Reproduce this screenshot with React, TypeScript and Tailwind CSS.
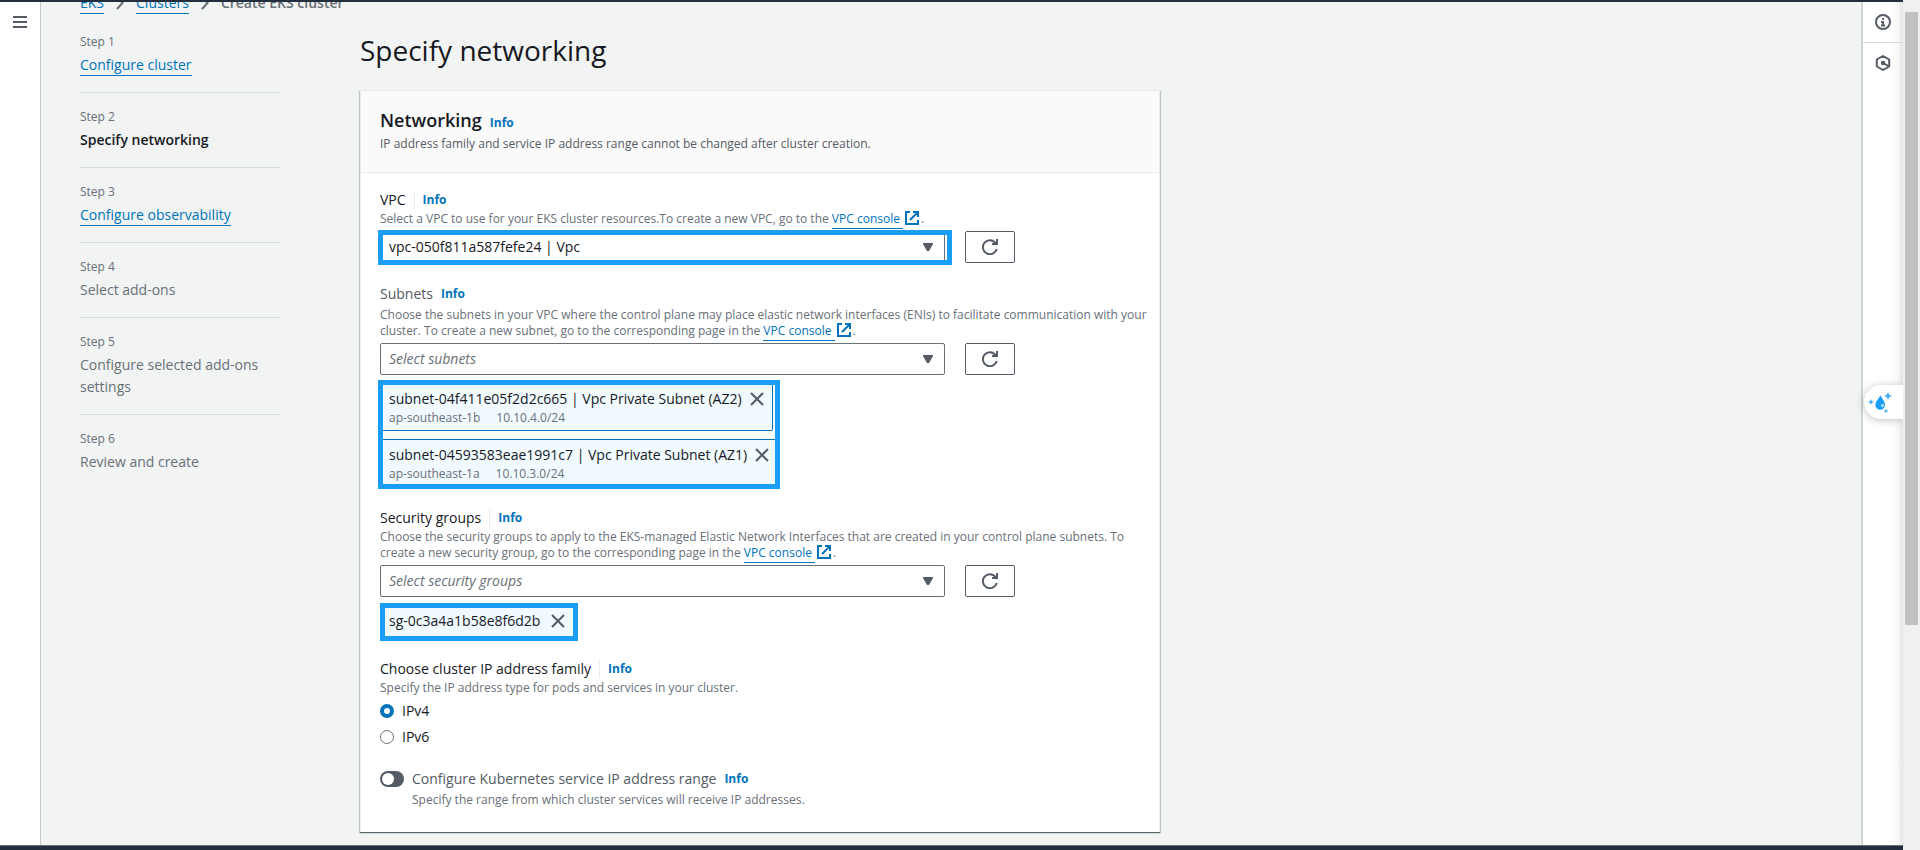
import type { ReactNode } from "react";

function InfoLink() {
  return (
    <a href="#info" className="text-xs leading-4 font-bold text-[#0073bb]">
      Info
    </a>
  );
}

function ExternalIcon() {
  return (
    <svg viewBox="0 0 14 14" className="mx-0.5 inline-block size-3.5 align-[-2px]" fill="none" stroke="#0073bb" strokeWidth="2" aria-hidden="true">
      <path d="M5 1H1v12h12V9" />
      <path d="M8 1h5v5M12.500 1.500 5 9" />
    </svg>
  );
}

function ConsoleLink() {
  return (
    <>
      <a href="#vpc-console" className="text-[#0073bb]">
        <span className="border-b border-[#0073bb] pb-px whitespace-pre">VPC console </span>
        <ExternalIcon />
      </a>
      .
    </>
  );
}

function Chevron() {
  return (
    <svg viewBox="0 0 8 14" className="mx-3 h-3.5 w-2" fill="none" stroke="#687078" strokeWidth="2" aria-hidden="true">
      <path d="m1 1 5.500 6L1 13" />
    </svg>
  );
}

function CloseIcon() {
  return (
    <svg viewBox="0 0 14 14" className="size-3.5" fill="none" stroke="#545b64" strokeWidth="2" aria-hidden="true">
      <path d="m1 1 12 12M13 1 1 13" />
    </svg>
  );
}

function RefreshButton({ label }: { label: string }) {
  return (
    <button type="button" aria-label={label} className="flex h-8 w-[50px] shrink-0 items-center justify-center rounded-[2px] border border-[#545b64] bg-white">
      <svg viewBox="0 0 16 16" className="size-4" fill="none" stroke="#545b64" strokeWidth="2" aria-hidden="true">
        <path d="M14.700 10A7 7 0 1 1 13.600 4.200L15 5.800" />
        <path d="M15 0v5h-5" />
      </svg>
    </button>
  );
}

function SelectRow({ id, value, placeholder, refresh, highlighted }: { id: string; value: string; placeholder?: boolean; refresh: string; highlighted?: boolean }) {
  return (
    <div className="mt-1 flex gap-5">
      <div className="relative w-[565px]">
        <select
          id={id}
          className={
            placeholder
              ? "block h-8 w-full appearance-none rounded-[2px] border border-[#687078] bg-white px-2 text-sm text-[#687078] italic"
              : "block h-8 w-full appearance-none rounded-[2px] border border-[#687078] bg-white px-2 text-sm text-[#16191f]"
          }
        >
          <option>{value}</option>
        </select>
        <svg viewBox="0 0 10 8" className="pointer-events-none absolute top-3 right-3 h-2 w-2.5" fill="#545b64" aria-hidden="true">
          <path d="M0 0h10v1L6 8H4L0 1z" />
        </svg>
        {highlighted && <div className="pointer-events-none absolute -top-px -right-[7px] -bottom-0.5 -left-0.5 border-5 border-[#1a9df5]" />}
      </div>
      <RefreshButton label={refresh} />
    </div>
  );
}

function Label({ htmlFor, children, divider, muted }: { htmlFor?: string; children: ReactNode; divider?: boolean; muted?: boolean }) {
  return (
    <div className="flex items-center gap-2 text-sm leading-[22px]">
      <label htmlFor={htmlFor} className={muted ? "text-[#545b64]" : "text-[#16191f]"}>
        {children}
      </label>
      {divider && <span className="h-[18px] w-px bg-[#eaeded]" />}
      <InfoLink />
    </div>
  );
}

function SubnetToken({ name, zone, cidr }: { name: string; zone: string; cidr: string }) {
  return (
    <li className="flex h-12 items-start gap-2 rounded-[2px] border border-[#0073bb] bg-[#f1faff] px-2 pt-1">
      <div>
        <div className="text-sm leading-[22px] text-[#16191f]">{name}</div>
        <div className="flex gap-4 text-xs leading-4 text-[#687078]">
          <span>{zone}</span>
          <span>{cidr}</span>
        </div>
      </div>
      <button type="button" aria-label={"Remove " + name} className="mt-1">
        <CloseIcon />
      </button>
    </li>
  );
}

function Step({ number, title, state }: { number: number; title: string; state: "link" | "current" | "todo" }) {
  return (
    <li className="border-b border-[#d5dbdb] py-4 first:pt-0 last:border-b-0">
      <div className="mb-1 text-xs leading-4 text-[#687078]">Step {number}</div>
      <div className="text-sm leading-[22px]">
        {state === "link" && (
          <a href={"#step-" + number} className="border-b border-[#0073bb] pb-px text-[#0073bb]">
            {title}
          </a>
        )}
        {state === "current" && <span className="font-semibold text-[#16191f]">{title}</span>}
        {state === "todo" && <span className="text-[#687078]">{title}</span>}
      </div>
    </li>
  );
}

const description = "-mr-4 text-xs leading-4 text-[#687078]";
const radio =
  "size-3.5 appearance-none rounded-full border border-[#687078] bg-white checked:border-4 checked:border-[#0073bb]";

export default function App() {
  return (
    <div className="flex h-screen overflow-hidden bg-white font-['Open_Sans','Noto_Sans',sans-serif]">
      <div className="flex min-w-0 flex-1 flex-col">
        <header className="h-0.5 shrink-0 bg-[#232f3e]" />
        <div className="flex min-h-0 flex-1">
          <aside className="w-[41px] shrink-0 border-r border-[#c5cbcb] bg-white pt-3.5 pl-[13px]">
            <button type="button" aria-label="Open navigation" className="block">
              <svg viewBox="0 0 14 12" className="h-3 w-3.5" fill="#545b64" aria-hidden="true">
                <path d="M0 0h14v2H0zM0 5h14v2H0zM0 10h14v2H0z" />
              </svg>
            </button>
          </aside>

          <main className="min-w-0 flex-1 overflow-hidden border-r-2 border-[#d0d5d5] bg-[#f2f3f3] px-[39px]">
            <nav aria-label="Breadcrumb" className="-mt-2.5 flex h-[22px] items-center text-sm leading-[22px]">
              <a href="#eks" className="border-b border-[#0073bb] text-[#0073bb] leading-5">
                EKS
              </a>
              <Chevron />
              <a href="#clusters" className="border-b border-[#0073bb] text-[#0073bb] leading-5">
                Clusters
              </a>
              <Chevron />
              <span className="font-semibold text-[#687078]">Create EKS cluster</span>
            </nav>

            <div className="mt-5 flex gap-20">
              <ol className="w-[200px] shrink-0">
                <Step number={1} title="Configure cluster" state="link" />
                <Step number={2} title="Specify networking" state="current" />
                <Step number={3} title="Configure observability" state="link" />
                <Step number={4} title="Select add-ons" state="todo" />
                <Step number={5} title="Configure selected add-ons settings" state="todo" />
                <Step number={6} title="Review and create" state="todo" />
              </ol>

              <div className="w-full max-w-[800px]">
                <h1 className="text-[28px] leading-8 text-[#16191f]">Specify networking</h1>

                <section className="mt-6 border-x border-t border-[#eaeded] bg-white shadow-[0_1px_1px_0_rgba(0,28,36,0.5),1px_1px_1px_0_rgba(0,28,36,0.15),-1px_1px_1px_0_rgba(0,28,36,0.15)]">
                  <header className="border-b border-[#eaeded] bg-[#fafafa] px-[19px] pt-[19px] pb-5">
                    <div className="flex items-baseline gap-2">
                      <h2 className="text-lg leading-5 font-semibold text-[#16191f]">Networking</h2>
                      <InfoLink />
                    </div>
                    <p className="mt-[5px] text-xs leading-4 text-[#545b64]">
                      IP address family and service IP address range cannot be changed after cluster creation.
                    </p>
                  </header>

                  <div className="flex flex-col gap-5 px-[19px] pt-4 pb-6">
                    <div>
                      <Label htmlFor="vpc" divider>
                        VPC
                      </Label>
                      <p className={description}>
                        Select a VPC to use for your EKS cluster resources.To create a new VPC, go to the <ConsoleLink />
                      </p>
                      <SelectRow id="vpc" value="vpc-050f811a587fefe24 | Vpc" refresh="Refresh VPCs" highlighted />
                    </div>

                    <div>
                      <Label htmlFor="subnets" muted>
                        Subnets
                      </Label>
                      <p className="-mr-4 pt-0.5 text-xs leading-4 text-[#687078]">
                        Choose the subnets in your VPC where the control plane may place elastic network interfaces (ENIs) to facilitate communication with your
                        cluster. To create a new subnet, go to the corresponding page in the <ConsoleLink />
                      </p>
                      <SelectRow id="subnets" value="Select subnets" placeholder refresh="Refresh subnets" />
                      <div className="relative mt-2 w-fit">
                        <ul className="flex flex-col items-start gap-2">
                          <SubnetToken name="subnet-04f411e05f2d2c665 | Vpc Private Subnet (AZ2)" zone="ap-southeast-1b" cidr="10.10.4.0/24" />
                          <SubnetToken name="subnet-04593583eae1991c7 | Vpc Private Subnet (AZ1)" zone="ap-southeast-1a" cidr="10.10.3.0/24" />
                        </ul>
                        <div className="pointer-events-none absolute -inset-x-0.5 -top-[3px] -bottom-0.5 border-5 border-[#1a9df5]" />
                      </div>
                    </div>

                    <div>
                      <Label htmlFor="groups" divider>
                        Security groups
                      </Label>
                      <p className={description}>
                        Choose the security groups to apply to the EKS-managed Elastic Network Interfaces that are created in your control plane subnets. To
                        create a new security group, go to the corresponding page in the <ConsoleLink />
                      </p>
                      <SelectRow id="groups" value="Select security groups" placeholder refresh="Refresh security groups" />
                      <div className="relative mt-2 w-fit">
                        <div className="flex h-[33px] items-center gap-[11px] bg-[#f1faff] px-[9px] pb-0.5 text-sm text-[#16191f]">
                          sg-0c3a4a1b58e8f6d2b
                          <button type="button" aria-label="Remove sg-0c3a4a1b58e8f6d2b">
                            <CloseIcon />
                          </button>
                        </div>
                        <div className="pointer-events-none absolute -top-0.5 -right-1 -bottom-[3px] left-0 border-5 border-[#1a9df5]" />
                      </div>
                    </div>

                    <div role="radiogroup" aria-label="Choose cluster IP address family">
                      <Label divider>Choose cluster IP address family</Label>
                      <p className={description}>Specify the IP address type for pods and services in your cluster.</p>
                      <div className="mt-1 flex flex-col gap-1 text-sm leading-[22px] text-[#16191f]">
                        <label className="flex items-center gap-2">
                          <input type="radio" name="family" defaultChecked className={radio} />
                          IPv4
                        </label>
                        <label className="flex items-center gap-2">
                          <input type="radio" name="family" className={radio} />
                          IPv6
                        </label>
                      </div>
                    </div>

                    <div className="flex gap-2">
                      <input
                        id="range"
                        type="checkbox"
                        role="switch"
                        className="mt-[3px] flex h-4 w-6 shrink-0 appearance-none items-center rounded-full bg-[#545b64] px-0.5 before:size-3 before:rounded-full before:bg-white"
                      />
                      <div>
                        <Label htmlFor="range" muted>
                          Configure Kubernetes service IP address range
                        </Label>
                        <p className="pt-0.5 text-xs leading-4 text-[#687078]">Specify the range from which cluster services will receive IP addresses.</p>
                      </div>
                    </div>
                  </div>
                </section>
              </div>
            </div>
          </main>

          <aside className="relative w-10 shrink-0 bg-linear-to-l from-[#e6e6e6] from-0% via-[#fafafa] via-15% to-white to-30%">
            <button type="button" aria-label="Open info panel" className="flex h-[41px] w-full items-center justify-center border-b border-[#d5dbdb]">
              <svg viewBox="0 0 16 16" className="size-4" fill="none" stroke="#545b64" strokeWidth="2" aria-hidden="true">
                <circle cx="8" cy="8" r="7" />
                <path d="M8 4v2M6 8h2v3.500M6 11.500h4" strokeWidth="1.800" />
              </svg>
            </button>
            <button type="button" aria-label="Open tools panel" className="flex h-10 w-full items-center justify-center">
              <svg viewBox="0 0 16 16" className="size-4" fill="none" stroke="#545b64" strokeWidth="2" aria-hidden="true">
                <path d="M8 1l6.200 3.500v7L8 15l-6.200-3.500v-7z" strokeLinejoin="round" />
                <circle cx="8" cy="8" r="2.200" fill="#545b64" stroke="none" />
                <path d="m8 8 5.500 3.200" />
              </svg>
            </button>
            <button
              type="button"
              aria-label="Open assistant"
              className="absolute top-[383px] right-0 flex h-[34px] w-[39px] items-center rounded-l-full bg-white pl-1 shadow-[0_1px_8px_rgba(0,0,0,0.25)] [clip-path:inset(-12px_0_-12px_-12px)]"
            >
              <svg viewBox="0 0 24 22" className="h-[22px] w-6" aria-hidden="true">
                <path d="M12.500 4c1 3 4.500 6 4.500 10a4.800 4.800 0 0 1-9.600 0c0-4 4.100-7 5.100-10z" fill="#1a9df5" />
                <circle cx="14.500" cy="14.500" r="1.500" fill="#bfe3fc" />
                <path d="m20 1 1.200 2.800L24 5l-2.800 1.200L20 9l-1.200-2.800L16 5l2.800-1.200zM3 8l.9 2.100L6 11l-2.100.9L3 14l-.9-2.100L0 11l2.100-.9zM18 17.500l.7 1.800 1.800.7-1.800.7-.7 1.800-.7-1.800-1.800-.7 1.800-.7z" fill="#45b0f5" />
              </svg>
            </button>
          </aside>
        </div>
        <footer className="h-[5px] shrink-0 border-t border-[#687078] bg-[#232f3e]" />
      </div>
      <div className="w-[17px] shrink-0 bg-[#f0f0f0] px-0.5 pt-3">
        <div className="h-[73.2%] bg-[#c1c1c1]" />
      </div>
    </div>
  );
}
